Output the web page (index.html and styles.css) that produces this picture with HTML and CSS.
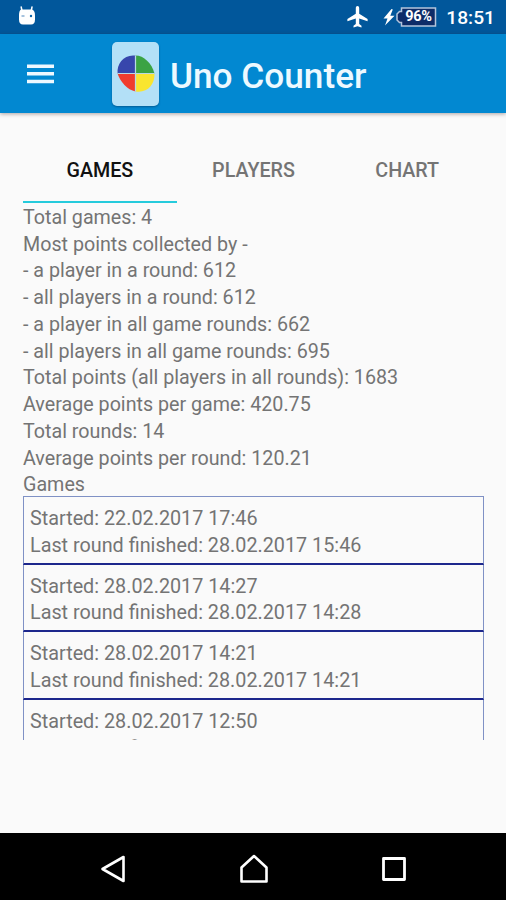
FILE: index.html
```html
<!DOCTYPE html>
<html lang="en">
<head>
<meta charset="utf-8">
<title>Uno Counter</title>
<link rel="stylesheet" href="styles.css">
</head>
<body>
<div class="screen">
  <div class="status">
    <svg class="robot" width="20" height="22" viewBox="0 0 20 22"><path d="M5.200 7 4.200 2M14 7l1-5" stroke="#fff" stroke-width="1.500" stroke-linecap="round"/><path d="M4 4.500h11q3 1 3 6v4q0 5-4 5H6q-4 0-4-5v-4q0-5 2-6Z" fill="#fff"/><path d="M4.500 11h3" stroke="#6c9bc9" stroke-width="1.200"/><circle cx="14" cy="11" r="1.200" fill="#0965ab"/></svg>
    <svg class="plane" width="21" height="22" viewBox="0 0 21 22"><path d="M20.600 15.200v-2.300l-8.400-5.200V2.200C12.200.9 11.500 0 10.500 0S8.800.9 8.800 2.200v5.500L.4 12.900v2.300l8.400-2.600v5.500l-2.300 1.700v1.700l4-1.200 4 1.200v-1.700l-2.300-1.700v-5.500Z" fill="#fff"/></svg>
    <svg class="bolt" width="12" height="17" viewBox="0 0 12 17"><path d="M8.500 0 .5 9.500h4L2 16.500l9.500-9.800H7.300L9.800.5Z" fill="#fff"/></svg>
    <div class="battery">
      <svg width="41" height="20" viewBox="0 0 41 20"><path d="M5.500 1H39.500V19H5.500V15.500H3.500L1 13V7l2.500-2.500h2Z" fill="#0d2c68" stroke="#b4c5dc" stroke-width="1.500"/></svg>
      <span class="percent">96%</span>
    </div>
    <span class="clock">18:51</span>
  </div>
  <header class="appbar">
    <svg class="menu" width="27" height="20" viewBox="0 0 27 20"><path d="M0 2.200h27M0 9.800h27M0 17.500h27" stroke="#eef8ff" stroke-width="3.500"/></svg>
    <div class="logo">
      <svg width="41" height="41" viewBox="0 0 40 40"><path d="M20 20H2.500C1.500 10 9 1 20 2.500Z" fill="#3746ac"/><path d="M20 20V2.500C28 2.500 36 10 38.500 20Z" fill="#3ba344"/><path d="M20 20H2.500C5 28 12 36 20 37.500Z" fill="#f03c2e"/><path d="M20 20h18.500C39 31 31 39.500 20 37.500Z" fill="#f9e52f"/><path d="M20 2.500v35M2.500 20h36" stroke="#b9d9e4" stroke-width="1.200"/></svg>
    </div>
    <h1 class="title">Uno Counter</h1>
  </header>
  <main class="content">
    <nav class="tabs">
      <div class="tab active">GAMES</div>
      <div class="tab">PLAYERS</div>
      <div class="tab">CHART</div>
    </nav>
    <div class="stats">
      <div>Total games: 4</div>
      <div>Most points collected by -</div>
      <div>- a player in a round: 612</div>
      <div>- all players in a round: 612</div>
      <div>- a player in all game rounds: 662</div>
      <div>- all players in all game rounds: 695</div>
      <div>Total points (all players in all rounds): 1683</div>
      <div>Average points per game: 420.75</div>
      <div>Total rounds: 14</div>
      <div>Average points per round: 120.21</div>
      <div>Games</div>
    </div>
    <div class="games">
      <div class="game"><div>Started: 22.02.2017 17:46</div><div>Last round finished: 28.02.2017 15:46</div></div>
      <div class="game"><div>Started: 28.02.2017 14:27</div><div>Last round finished: 28.02.2017 14:28</div></div>
      <div class="game"><div>Started: 28.02.2017 14:21</div><div>Last round finished: 28.02.2017 14:21</div></div>
      <div class="game"><div>Started: 28.02.2017 12:50</div><div>Last round finished: 28.02.2017 14:20</div></div>
    </div>
  </main>
  <footer class="navbar">
    <svg width="26" height="30" viewBox="0 0 26 30"><path d="M23.500 3v24L2.500 15Z" fill="none" stroke="#fff" stroke-width="2.600" stroke-linejoin="round"/></svg>
    <svg width="30" height="30" viewBox="0 0 30 30"><path d="M2.500 27.500V13.500L15 2l12.500 11.500v14Z" fill="none" stroke="#fff" stroke-width="2.600" stroke-linejoin="round"/></svg>
    <svg width="26" height="26" viewBox="0 0 26 26"><rect x="2.500" y="2.500" width="21" height="21" fill="none" stroke="#fff" stroke-width="2.800" stroke-linejoin="round"/></svg>
  </footer>
</div>
</body>
</html>
```
FILE: styles.css
```css
* { box-sizing: border-box; }
body { margin: 0; }
.screen {
  width: 506px;
  height: 900px;
  display: flex;
  flex-direction: column;
  overflow: hidden;
  background: #fafafa;
  color: #747474;
  font-family: Roboto, "Liberation Sans", sans-serif;
  font-size: 19.7px;
  line-height: 26.73px;
}
svg { display: block; flex: none; }
.status {
  flex: none;
  height: 34px;
  display: flex;
  align-items: center;
  padding: 0 11px 0 17px;
  background: #01579b;
  color: #fff;
}
.robot { margin-top: -2px; }
.plane { margin-left: auto; }
.bolt { margin-left: 15px; }
.battery { display: grid; margin-left: 1px; width: 41px; }
.battery > * { grid-area: 1 / 1; }
.percent {
  padding-left: 9px;
  font-size: 14.5px;
  font-weight: 700;
  line-height: 20px;
  letter-spacing: -0.4px;
}
.clock {
  margin-left: 9px;
  padding-top: 3px;
  font-weight: 500;
  font-size: 19.2px;
}
.appbar {
  flex: none;
  height: 79px;
  display: flex;
  align-items: center;
  padding-left: 27px;
  background: #0288d1;
  box-shadow: 0 1px 4px rgba(50, 30, 30, .4);
}
.logo {
  width: 47px;
  height: 64px;
  margin: 0 11px 0 58px;
  display: flex;
  align-items: center;
  justify-content: center;
  border-radius: 5px;
  background: #b3e0f7;
  box-shadow: 0 1px 2px rgba(0, 50, 90, .5);
}
.title {
  margin: 4px 0 0;
  color: #edf9ff;
  font-size: 35.2px;
  font-weight: 500;
  line-height: 42px;
}
.content { flex: 1; padding: 23px 22px 0 23px; }
.tabs {
  display: flex;
  width: 461px;
  height: 67px;
}
.tab {
  flex: 1;
  padding-top: 22px;
  text-align: center;
  font-weight: 500;
}
.active {
  color: #111;
  border-bottom: 2px solid #26cbdc;
}
.stats { padding-top: 2px; }
.games {
  height: 244px;
  margin-top: -3px;
  overflow: hidden;
  font-size: 19.8px;
}
.game {
  height: 67.6px;
  padding: 9px 6px 0;
  border: solid #7f91c5;
  border-width: 0 1px 2px;
  border-bottom-color: #1d278c;
}
.game:first-child {
  height: 68.6px;
  border-top: 1px solid #7f91c5;
}
.navbar {
  flex: none;
  height: 67px;
  display: flex;
  align-items: center;
  justify-content: space-between;
  padding: 4px 99px 0 100px;
  background: #000;
}
```
